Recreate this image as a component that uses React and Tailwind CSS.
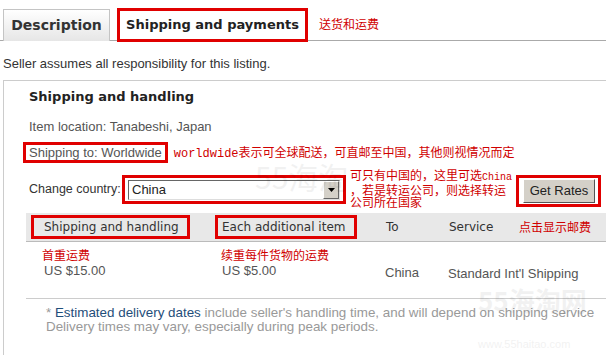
import React from "react";

const RED = "border-[3px] border-[#e00000]";

export default function App() {
  return (
    <div className="w-[606px] h-[355px] overflow-hidden bg-white relative" style={{ fontFamily: '"Liberation Sans", Arial, sans-serif' }}>
      {/* Tabs */}
      <div className="flex items-start h-[41px] border-b border-[#aaaaaa] pl-[3px] w-[606px]">
        <div className="mt-[9px] h-[32px] w-[107px] border border-b-0 border-[#c4c4c4] bg-gradient-to-b from-white to-[#e6e6e6] flex items-center justify-center text-[14px] font-bold text-[#333] whitespace-nowrap" style={{ fontFamily: '"DejaVu Sans", Verdana, sans-serif' }}>
          Description
        </div>
        <div className={`ml-[7px] mt-[8px] h-[34px] w-[191px] ${RED} bg-white flex items-center justify-center text-[13px] font-bold text-[#222] relative z-10 whitespace-nowrap`} style={{ fontFamily: '"DejaVu Sans", Verdana, sans-serif' }}>
          Shipping and payments
        </div>
        <div className="ml-[11px] mt-[15px] text-[12px] text-[#d00000]" style={{ fontFamily: '"Noto Sans CJK SC", sans-serif' }}>
          送货和运费
        </div>
      </div>

      <div className="pl-[3px] pt-[15px] text-[13px] leading-[16px] text-[#333]">
        Seller assumes all responsibility for this listing.
      </div>

      {/* Panel */}
      <div className="ml-[3px] mt-[8px] w-[700px] h-[400px] border-l border-t border-[#cccccc]">
        <div className="pl-[25px] pt-[6px] text-[13px] font-bold text-[#222] leading-[20px] whitespace-nowrap" style={{ fontFamily: '"DejaVu Sans", Verdana, sans-serif' }}>
          Shipping and handling
        </div>
        <div className="pl-[25px] pt-[12px] text-[13px] leading-[16px] text-[#555]">
          Item location: Tanabeshi, Japan
        </div>
        <div className="flex items-center mt-[7px] pl-[19px]">
          <div className={`${RED} h-[21px] px-[3px] flex items-center text-[13px] text-[#555] whitespace-nowrap`}>Shipping to: Worldwide</div>
          <div className="ml-[6px] text-[12px] text-[#d00000] whitespace-nowrap" style={{ fontFamily: '"Liberation Mono", "Noto Sans CJK SC", monospace' }}>
            worldwide<span style={{ fontFamily: '"Noto Sans CJK SC", sans-serif' }}>表示可全球配送，可直邮至中国，其他则视情况而定</span>
          </div>
        </div>

        <div className="flex items-start mt-[6px] pl-[25px]">
          <div className="w-[93px] shrink-0 mt-[12px] text-[12.5px] text-[#333] leading-[16px] whitespace-nowrap">Change country:</div>
          <div className={`w-[224px] shrink-0 mt-[6px] h-[29px] ${RED} flex items-center px-[3px]`}>
            <div className="w-full h-[20px] border border-t-[#666] border-l-[#666] border-b-[#ddd] border-r-[#ddd] flex items-center justify-between bg-white">
              <span className="pl-[3px] text-[13px] text-[#222]">China</span>
              <div className="w-[16px] h-[18px] bg-[#d4d0c8] border border-t-white border-l-white border-b-[#666] border-r-[#666] flex items-center justify-center">
                <svg width="7" height="4" viewBox="0 0 7 4"><path d="M0 0h7L3.5 4z" fill="#000" /></svg>
              </div>
            </div>
          </div>
          <div className="ml-[4px] w-[166px] shrink-0 text-[12px] leading-[12px] text-[#d00000] whitespace-nowrap" style={{ fontFamily: '"Noto Sans CJK SC", sans-serif' }}>
            <div>可只有中国的，这里可选<span className="text-[10px]" style={{ fontFamily: '"Liberation Mono", monospace' }}>China</span></div>
            <div>，若是转运公司，则选择转运</div>
            <div>公司所在国家</div>
          </div>
          <div className={`mt-[6px] w-[85px] shrink-0 h-[32px] ${RED} flex items-center pl-[4px]`}>
            <div className="w-[72px] h-[24px] bg-[#d4d0c8] border border-t-white border-l-white border-b-[#555] border-r-[#555] flex items-center justify-center text-[13px] text-[#222] whitespace-nowrap">Get Rates</div>
          </div>
        </div>

        {/* Table header */}
        <div className="ml-[22px] mt-[5px] h-[29px] bg-[#e8e8e8] border-b border-[#bbbbbb] flex items-center text-[12px] text-[#333]" style={{ fontFamily: '"DejaVu Sans", Verdana, sans-serif' }}>
          <div className={`ml-[5px] w-[159px] h-[24px] ${RED} flex items-center pl-[10px] whitespace-nowrap`}>Shipping and handling</div>
          <div className={`ml-[25px] w-[142px] h-[24px] ${RED} flex items-center pl-[4px] whitespace-nowrap`}>Each additional item</div>
          <div className="ml-[29px] w-[63px]">To</div>
          <div className="w-[70px]">Service</div>
          <div className="text-[#d00000] whitespace-nowrap" style={{ fontFamily: '"Noto Sans CJK SC", sans-serif' }}>点击显示邮费</div>
        </div>

        {/* Row */}
        <div className="ml-[22px] h-[57px] border-b border-[#cccccc] flex text-[13px] text-[#555]">
          <div className="pl-[16px] w-[195px] pt-[5px]">
            <div className="text-[12px] leading-[16px] text-[#d00000]" style={{ fontFamily: '"Noto Sans CJK SC", sans-serif' }}>首重运费</div>
            <div className="pl-[2px] leading-[16px]">US $15.00</div>
          </div>
          <div className="w-[164px] pt-[5px]">
            <div className="text-[12px] leading-[16px] text-[#d00000]" style={{ fontFamily: '"Noto Sans CJK SC", sans-serif' }}>续重每件货物的运费</div>
            <div className="pl-[1px] leading-[16px]">US $5.00</div>
          </div>
          <div className="w-[63px] pt-[21px]">China</div>
          <div className="pt-[22px] whitespace-nowrap">Standard Int'l Shipping</div>
        </div>

        <div className="pl-[42px] pt-[7px] text-[13.4px] leading-[14px] text-[#999] whitespace-nowrap">
          <div>* <span className="text-[#1f4e7a]">Estimated delivery dates</span> include seller's handling time, and will depend on shipping service</div>
          <div>Delivery times may vary, especially during peak periods.</div>
        </div>
      </div>

      {/* watermarks */}
      <div className="absolute left-[255px] top-[158px] text-[30px] leading-[36px] text-[#000] opacity-[0.05] pointer-events-none" style={{ fontFamily: '"Noto Sans CJK SC", sans-serif' }}>55海淘</div>
      <div className="absolute left-[478px] top-[284px] text-[26px] leading-[32px] font-bold text-[#000] opacity-[0.05] pointer-events-none" style={{ fontFamily: '"Noto Sans CJK SC", sans-serif' }}>55海淘网</div>
      <div className="absolute left-[478px] top-[336px] text-[11px] text-[#000] opacity-[0.05] pointer-events-none">www.55haitao.com</div>
    </div>
  );
}
